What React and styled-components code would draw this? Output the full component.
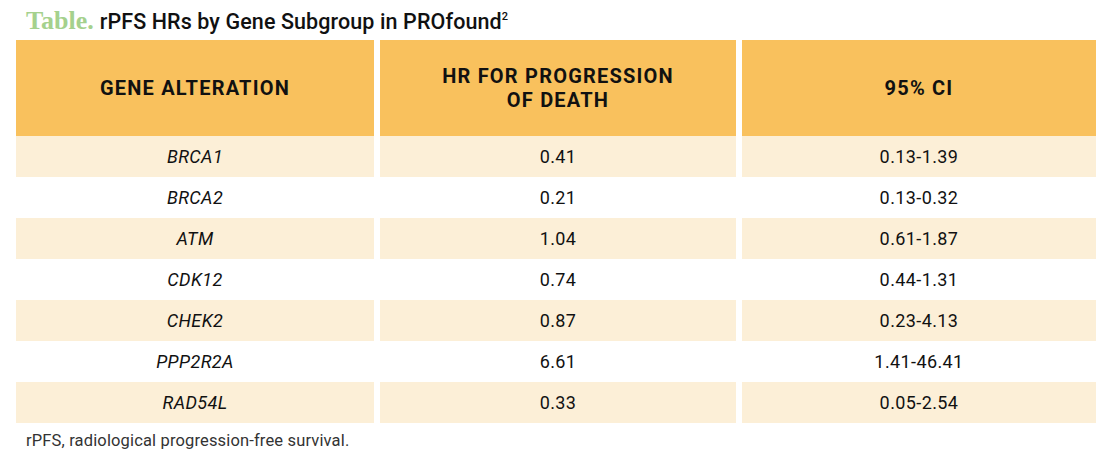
import React from 'react';
import styled, { createGlobalStyle } from 'styled-components';

const GlobalStyle = createGlobalStyle`
    body {
        margin: 0;
        background: #ffffff;
        font-family: 'Roboto', 'Liberation Sans', sans-serif;
        color: #111111;
    }
`;

const Page = styled.div`
    width: 1116px;
    height: 466px;
    padding: 6px 20px 0 16px;
    box-sizing: border-box;
`;

const Title = styled.div`
    padding-left: 10px;
    height: 34px;
    display: flex;
    align-items: baseline;
    gap: 6px;
`;

const TitleLabel = styled.span`
    font-family: 'Liberation Serif', 'DejaVu Serif', serif;
    font-weight: 700;
    font-size: 26px;
    color: #a5d18d;
`;

const TitleText = styled.span`
    font-size: 21.5px;
    font-weight: 500;
    letter-spacing: 0.1px;
    color: #111111;

    sup {
        font-size: 11px;
        vertical-align: 9px;
    }
`;

const Grid = styled.div`
    display: flex;
    flex-direction: column;
`;

const Row = styled.div`
    display: grid;
    grid-template-columns: 358px 356px 354px;
    column-gap: 6px;
    height: ${(p) => (p.$head ? '96px' : '41px')};
`;

const Cell = styled.div`
    display: flex;
    align-items: center;
    justify-content: center;
    text-align: center;
    background: ${(p) => (p.$head ? '#f9c15d' : p.$shade ? '#fcefd7' : '#ffffff')};
    font-size: ${(p) => (p.$head ? '20px' : '18px')};
    font-weight: ${(p) => (p.$head ? 700 : 400)};
    font-style: ${(p) => (p.$italic ? 'italic' : 'normal')};
    letter-spacing: ${(p) => (p.$head ? '1.2px' : '0.4px')};
    line-height: ${(p) => (p.$head ? '24px' : '20px')};
    color: #111111;
`;

const Footnote = styled.div`
    padding: 8px 0 0 10px;
    font-size: 16.5px;
    letter-spacing: 0.15px;
    color: #333333;
`;

const rows = [
    ['BRCA1', '0.41', '0.13-1.39'],
    ['BRCA2', '0.21', '0.13-0.32'],
    ['ATM', '1.04', '0.61-1.87'],
    ['CDK12', '0.74', '0.44-1.31'],
    ['CHEK2', '0.87', '0.23-4.13'],
    ['PPP2R2A', '6.61', '1.41-46.41'],
    ['RAD54L', '0.33', '0.05-2.54'],
];

export default function App() {
    return (
        <Page>
            <GlobalStyle />
            <Title>
                <TitleLabel>Table.</TitleLabel>
                <TitleText>
                    rPFS HRs by Gene Subgroup in PROfound<sup>2</sup>
                </TitleText>
            </Title>
            <Grid>
                <Row $head>
                    <Cell $head>GENE ALTERATION</Cell>
                    <Cell $head>
                        HR FOR PROGRESSION
                        <br />
                        OF DEATH
                    </Cell>
                    <Cell $head>95% CI</Cell>
                </Row>
                {rows.map((r, i) => (
                    <Row key={r[0]}>
                        <Cell $shade={i % 2 === 0} $italic>
                            {r[0]}
                        </Cell>
                        <Cell $shade={i % 2 === 0}>{r[1]}</Cell>
                        <Cell $shade={i % 2 === 0}>{r[2]}</Cell>
                    </Row>
                ))}
            </Grid>
            <Footnote>rPFS, radiological progression-free survival.</Footnote>
        </Page>
    );
}
